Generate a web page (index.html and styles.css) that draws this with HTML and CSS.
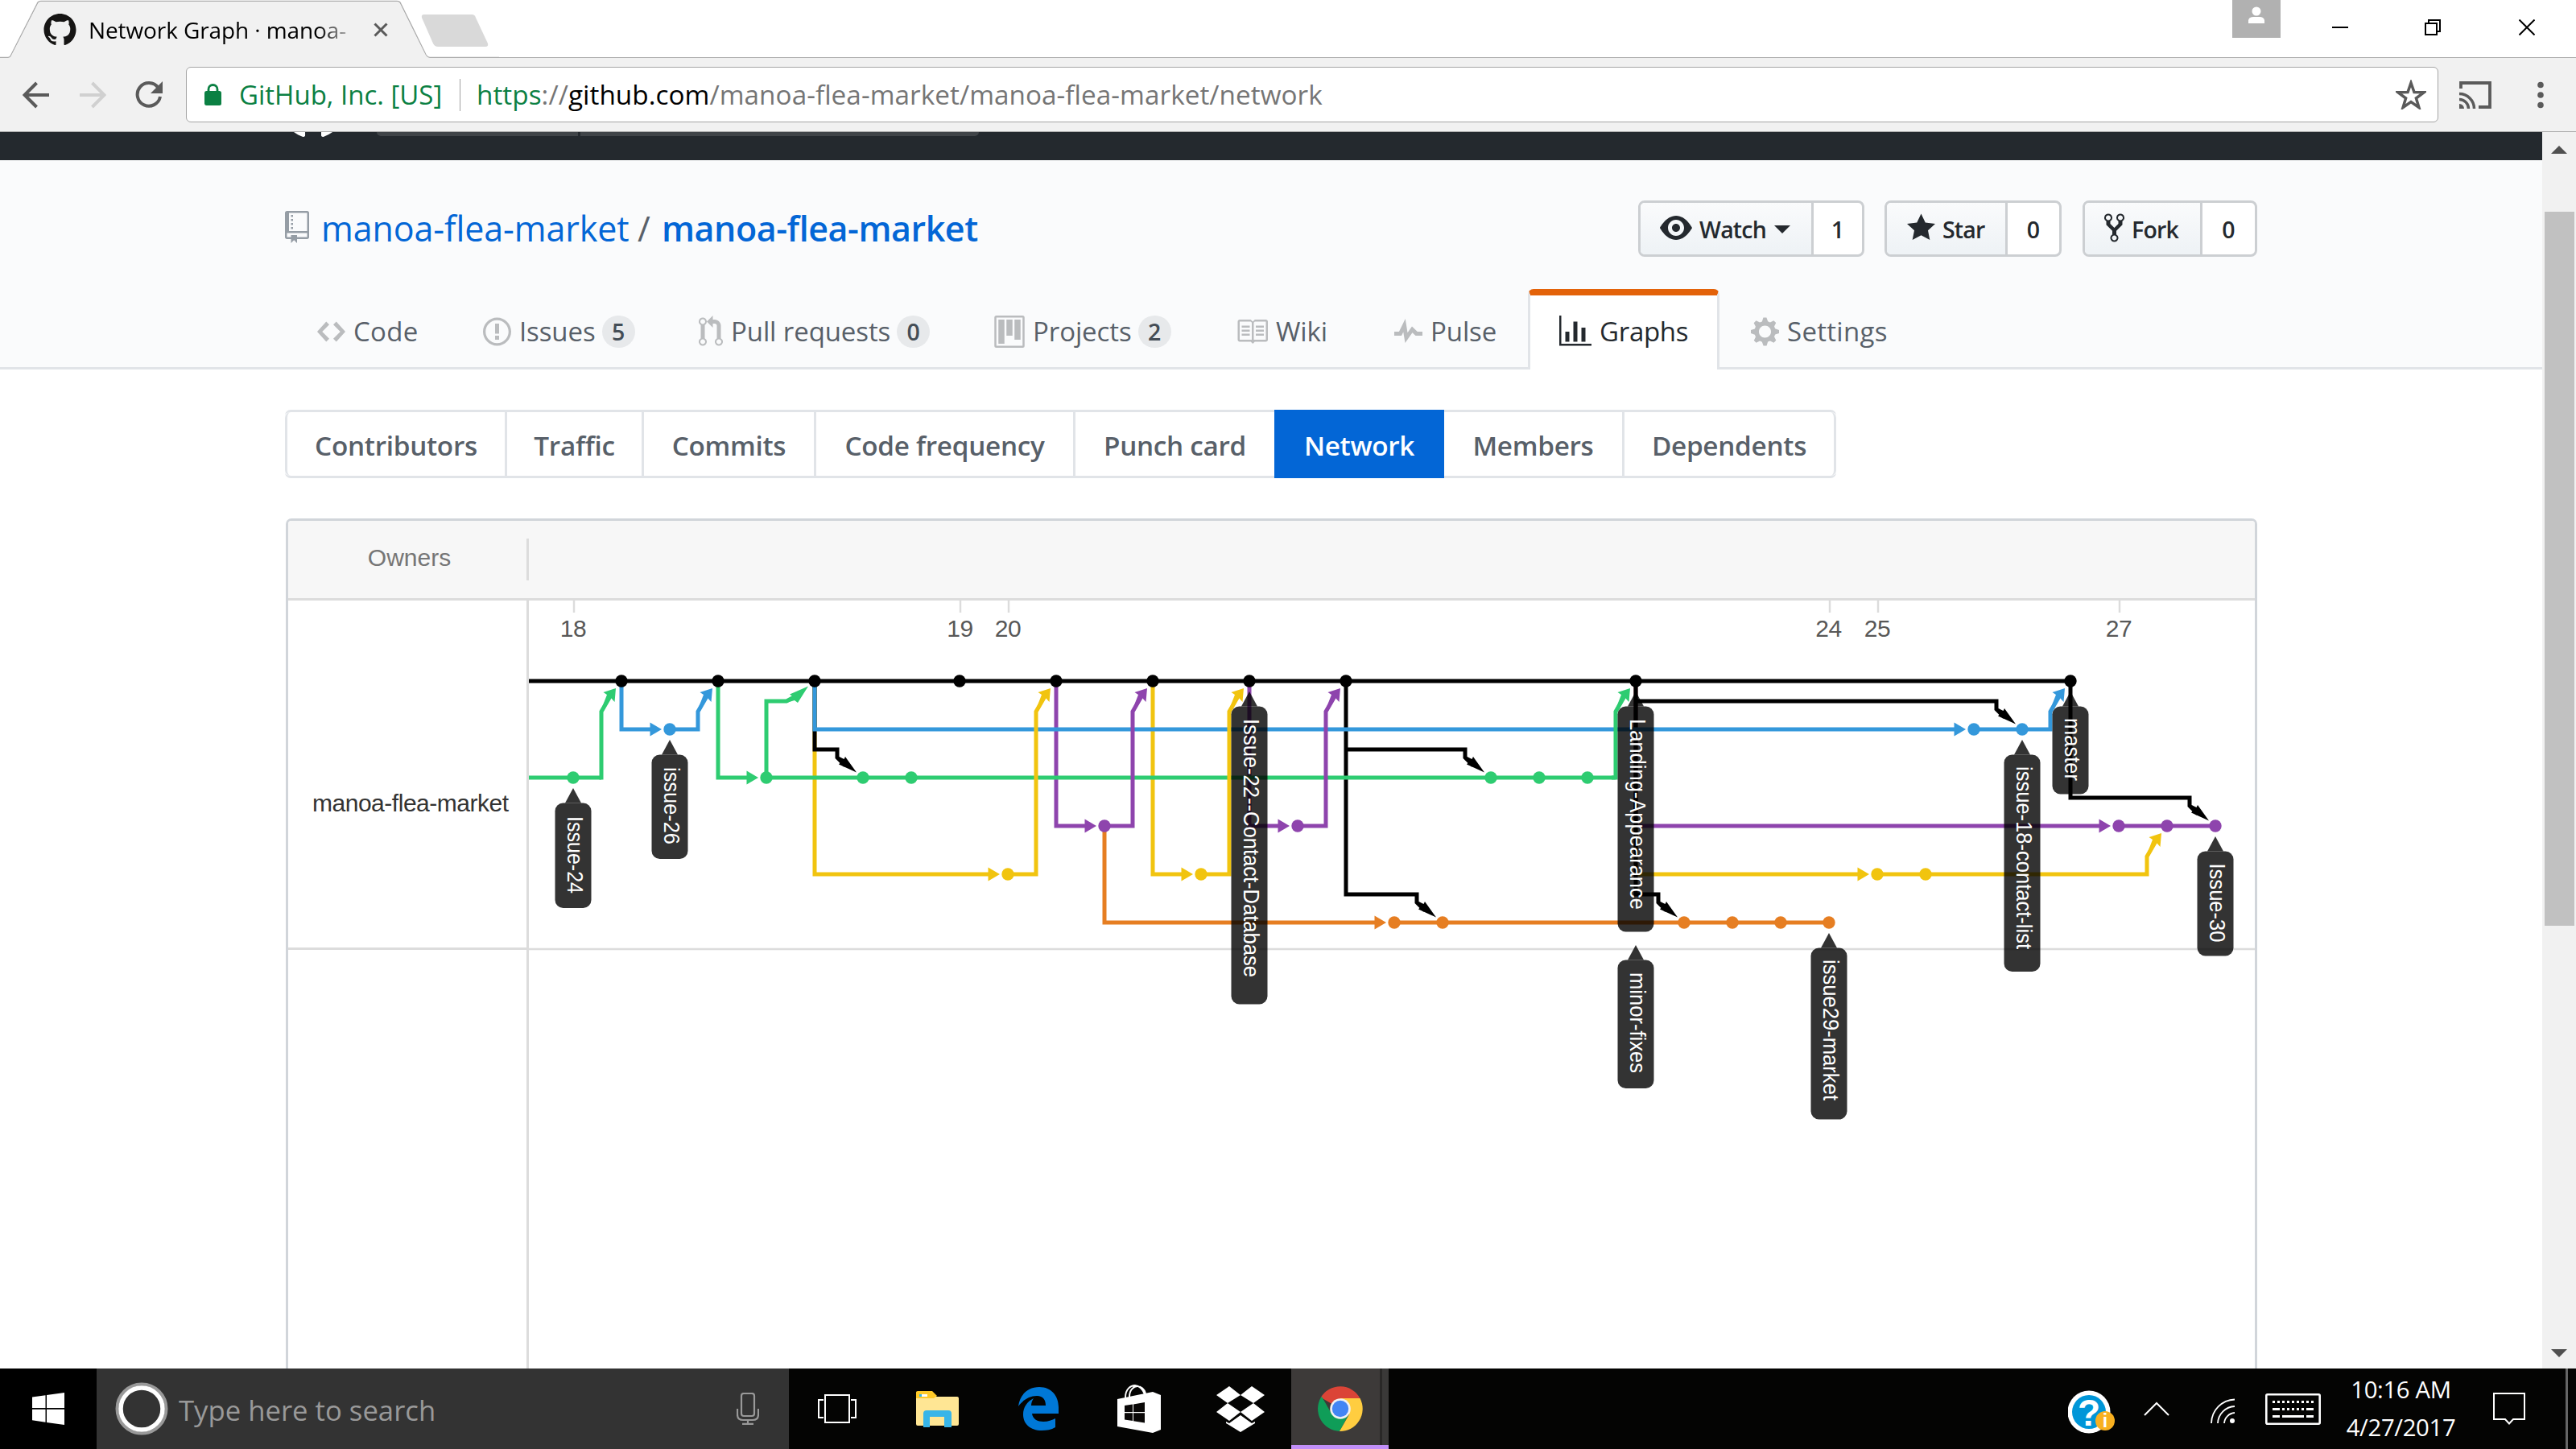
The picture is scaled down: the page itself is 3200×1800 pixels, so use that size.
FILE: index.html
```
<!DOCTYPE html>
<html lang="en">
<head>
<meta charset="utf-8">
<title>Network Graph · manoa-flea-market</title>
<link rel="stylesheet" href="styles.css">
</head>
<body>
<div class="screen">
  <header class="titlebar">
    <svg class="tab-shape" viewBox="0 0 620 72"><path d="M0 71.5H10Q13 71.5 14 68L46 5Q47 1.500 51 1.500H493Q497 1.500 498 5L529 68Q531 71.500 534 71.500H620" fill="none" stroke="#adadad" stroke-width="1.500"/><path d="M10 72Q13.500 71.500 14.500 68L47 5Q48 2 51 2H493Q496 2 497 5L528.500 68Q530.500 71.500 534 72Z" fill="#f1f1f1"/><path d="M527 18H586Q590 18 591 22L606 54Q607 58 603 58H544Q540 58 538 54L524 22Q523 18 527 18Z" fill="#d9d9d9"/></svg>
    <div class="tab">
      <svg class="favicon" viewBox="0 0 16 16"><path fill="#161514" d="M8 0C3.580 0 0 3.580 0 8c0 3.540 2.290 6.530 5.470 7.590.4.070.55-.17.55-.38 0-.19-.01-.82-.01-1.490-2.010.37-2.530-.49-2.690-.94-.09-.23-.48-.94-.82-1.130-.28-.15-.68-.52-.01-.53.63-.01 1.080.58 1.230.82.72 1.210 1.870.87 2.330.66.070-.52.28-.87.51-1.070-1.780-.2-3.640-.89-3.640-3.950 0-.87.31-1.590.82-2.150-.08-.2-.36-1.020.08-2.120 0 0 .67-.21 2.200.82.64-.18 1.320-.27 2-.27.68 0 1.360.09 2 .27 1.530-1.040 2.200-.82 2.200-.82.44 1.100.16 1.920.08 2.120.51.56.82 1.270.82 2.150 0 3.070-1.870 3.750-3.650 3.950.29.25.54.73.54 1.480 0 1.070-.01 1.930-.01 2.200 0 .21.15.46.55.38A8.013 8.013 0 0 0 16 8c0-4.420-3.580-8-8-8z"/></svg>
      <span class="tab-title">Network Graph · manoa-</span>
      <svg class="tab-close" viewBox="0 0 18 18"><path d="M1.500 1.500l15 15M16.500 1.500l-15 15" stroke="#5a5a5a" stroke-width="3"/></svg>
    </div>
    <div class="window-controls">
      <span class="profile"><svg viewBox="0 0 60 47"><circle cx="30" cy="14" r="5.500" fill="#fff"/><path d="M20 29v-4q1-4 6-4h8q5 0 6 4v4z" fill="#fff"/></svg></span>
      <svg class="win" viewBox="0 0 20 20"><path d="M0 10h20" stroke="#000" stroke-width="2"/></svg>
      <svg class="win" viewBox="0 0 20 20"><path d="M1 5h14v14H1zM5 5V1h14v14h-4" fill="none" stroke="#000" stroke-width="2"/></svg>
      <svg class="win" viewBox="0 0 20 20"><path d="M.5.5l19 19M19.500.5l-19 19" stroke="#000" stroke-width="2"/></svg>
    </div>
  </header>

  <div class="toolbar">
    <div class="nav-buttons">
      <svg viewBox="0 0 34 34"><path d="M33 17H3M17.500 2L2.500 17l15 15" fill="none" stroke="#5a5a5a" stroke-width="4"/></svg>
      <svg viewBox="0 0 34 34"><path d="M1 17h30M16.500 2l15 15-15 15" fill="none" stroke="#d0d0d0" stroke-width="4"/></svg>
      <svg viewBox="0 0 34 34"><path d="M28.500 8A14.300 14.300 0 1 0 31 19" fill="none" stroke="#5a5a5a" stroke-width="4"/><path d="M34 0v15H19z" fill="#5a5a5a"/></svg>
    </div>
    <div class="omnibox">
      <svg class="lock" viewBox="0 0 21 27"><rect y="9" width="21" height="18" rx="2.500" fill="#0b8043"/><path d="M5 10V7a5.500 5.500 0 0 1 11 0v3" fill="none" stroke="#0b8043" stroke-width="2.800"/></svg>
      <span class="org">GitHub, Inc. [US]</span>
      <span class="url"><span class="scheme">https</span>://<span class="host">github.com</span>/manoa-flea-market/manoa-flea-market/network</span>
      <svg class="bookmark" viewBox="0 0 38 37"><path d="M19 4l4 11.500 12 .3-9.600 7.200 3.500 11.500L19 27.600 9.100 34.500 12.600 23 3 15.800l12-.3z" fill="none" stroke="#5a5a5a" stroke-width="3.500"/></svg>
    </div>
    <svg class="cast" viewBox="0 0 40 34"><path d="M2 9V2h36v30H24" fill="none" stroke="#5a5a5a" stroke-width="3.800"/><path d="M0 28a6 6 0 0 1 6 6H0z" fill="#5a5a5a"/><path d="M0 22.500A11.500 11.500 0 0 1 11.500 34M0 15.500A18.500 18.500 0 0 1 18.500 34" fill="none" stroke="#5a5a5a" stroke-width="3.500"/></svg>
    <svg class="menu" viewBox="0 0 8 34"><g fill="#5a5a5a"><circle cx="4" cy="4.500" r="3.800"/><circle cx="4" cy="17" r="3.800"/><circle cx="4" cy="29.500" r="3.800"/></g></svg>
  </div>

  <div class="viewport">
    <main class="page">
      <div class="site-header">
        <svg class="mark" viewBox="0 0 16 16"><path fill="#fff" d="M8 0C3.580 0 0 3.580 0 8c0 3.540 2.290 6.530 5.470 7.590.4.070.55-.17.55-.38 0-.19-.01-.82-.01-1.490-2.010.37-2.530-.49-2.690-.94-.09-.23-.48-.94-.82-1.130-.28-.15-.68-.52-.01-.53.63-.01 1.080.58 1.230.82.72 1.210 1.870.87 2.330.66.070-.52.28-.87.51-1.070-1.780-.2-3.640-.89-3.640-3.950 0-.87.31-1.590.82-2.150-.08-.2-.36-1.020.08-2.120 0 0 .67-.21 2.200.82.64-.18 1.320-.27 2-.27.68 0 1.360.09 2 .27 1.530-1.040 2.200-.82 2.200-.82.44 1.100.16 1.920.08 2.120.51.56.82 1.270.82 2.150 0 3.070-1.870 3.750-3.650 3.950.29.25.54.73.54 1.480 0 1.070-.01 1.930-.01 2.200 0 .21.15.46.55.38A8.013 8.013 0 0 0 16 8c0-4.420-3.580-8-8-8z"/></svg>
        <div class="site-search"><span></span></div>
      </div>

      <div class="repohead">
        <div class="repo-top">
          <svg class="repo-icon" viewBox="0 0 12 16"><path d="M4 9H3V8h1v1zm0-3H3v1h1V6zm0-2H3v1h1V4zm0-2H3v1h1V2zm8-1v12c0 .55-.45 1-1 1H6v2l-1.500-1.500L3 16v-2H1c-.55 0-1-.45-1-1V1c0-.55.45-1 1-1h10c.55 0 1 .45 1 1zm-1 10H1v2h2v-1h3v1h5v-2zm0-10H2v9h9V1z"/></svg>
          <h1><a class="owner">manoa-flea-market</a><span class="slash">/</span><a class="name">manoa-flea-market</a></h1>
          <div class="actions">
            <div class="action watch"><span class="btn"><svg class="i-eye" viewBox="0 0 16 16"><path d="M8.060 2C3 2 0 8 0 8s3 6 8.060 6C13 14 16 8 16 8s-3-6-7.940-6zM8 12c-2.200 0-4-1.780-4-4 0-2.200 1.800-4 4-4 2.220 0 4 1.800 4 4 0 2.220-1.780 4-4 4zm2-4c0 1.110-.89 2-2 2-1.110 0-2-.89-2-2 0-1.110.89-2 2-2 1.110 0 2 .89 2 2z"/></svg>Watch<i class="caret"></i></span><span class="count">1</span></div>
            <div class="action star"><span class="btn"><svg class="i-star" viewBox="0 0 14 16"><path d="M14 6l-4.900-.64L7 1 4.900 5.360 0 6l3.600 3.260L2.670 14 7 11.670 11.330 14l-.93-4.740z"/></svg>Star</span><span class="count">0</span></div>
            <div class="action fork"><span class="btn"><svg class="i-fork" viewBox="0 0 10 16"><path d="M8 1a1.993 1.993 0 0 0-1 3.720V6L5 8 3 6V4.720A1.993 1.993 0 0 0 2 1a1.993 1.993 0 0 0-1 3.720V6.500l3 3v1.780A1.993 1.993 0 0 0 5 15a1.993 1.993 0 0 0 1-3.720V9.500l3-3V4.720A1.993 1.993 0 0 0 8 1zM2 4.200C1.340 4.200.8 3.650.8 3c0-.65.55-1.200 1.200-1.200.65 0 1.200.55 1.200 1.200 0 .65-.55 1.200-1.200 1.200zm3 10c-.66 0-1.200-.55-1.200-1.200 0-.65.55-1.200 1.200-1.200.65 0 1.200.55 1.200 1.200 0 .65-.55 1.200-1.200 1.200zm3-10c-.66 0-1.200-.55-1.200-1.200 0-.65.55-1.200 1.200-1.200.65 0 1.200.55 1.200 1.200 0 .65-.55 1.200-1.200 1.200z"/></svg>Fork</span><span class="count">0</span></div>
          </div>
        </div>
        <nav class="reponav">
          <a><svg class="w14" viewBox="0 0 14 16"><path d="M9.500 3L8 4.500 11.500 8 8 11.500 9.500 13 14 8 9.500 3zm-5 0L0 8l4.500 5L6 11.500 2.500 8 6 4.500 4.500 3z"/></svg>Code</a>
          <a><svg class="w14" viewBox="0 0 14 16"><path d="M7 2.300c3.140 0 5.700 2.560 5.700 5.700s-2.560 5.700-5.700 5.700A5.710 5.710 0 0 1 1.300 8c0-3.140 2.560-5.700 5.700-5.700zM7 1C3.140 1 0 4.140 0 8s3.140 7 7 7 7-3.140 7-7-3.140-7-7-7zm1 3H6v5h2V4zm0 6H6v2h2v-2z"/></svg>Issues<b>5</b></a>
          <a><svg class="w12" viewBox="0 0 12 16"><path d="M11 11.280V5c-.03-.78-.34-1.470-.94-2.060C9.460 2.350 8.780 2.030 8 2H7V0L4 3l3 3V4h1c.27.02.48.11.69.31.21.2.3.42.31.69v6.280A1.993 1.993 0 0 0 10 15a1.993 1.993 0 0 0 1-3.720zm-1 2.920c-.66 0-1.200-.55-1.200-1.200 0-.65.55-1.200 1.200-1.200.65 0 1.200.55 1.200 1.200 0 .65-.55 1.200-1.200 1.200zM4 3c0-1.110-.89-2-2-2a1.993 1.993 0 0 0-1 3.720v6.560A1.993 1.993 0 0 0 2 15a1.993 1.993 0 0 0 1-3.720V4.720c.59-.34 1-.98 1-1.720zm-.8 10c0 .66-.55 1.200-1.200 1.200-.65 0-1.200-.55-1.200-1.200 0-.65.55-1.200 1.200-1.200.65 0 1.200.55 1.200 1.200zM2 4.200C1.340 4.200.8 3.650.8 3c0-.65.55-1.200 1.200-1.200.65 0 1.200.55 1.200 1.200 0 .65-.55 1.200-1.200 1.200z"/></svg>Pull requests<b>0</b></a>
          <a><svg class="w15" viewBox="0 0 15 16"><path fill-rule="evenodd" d="M10 12h3V2h-3v10zm-4-2h3V2H6v8zm-4 4h3V2H2v12zm-1 1h13V1H1v14zM14 0H1a1 1 0 0 0-1 1v14a1 1 0 0 0 1 1h13a1 1 0 0 0 1-1V1a1 1 0 0 0-1-1z"/></svg>Projects<b>2</b></a>
          <a><svg class="w16" viewBox="0 0 16 16"><path d="M3 5h4v1H3V5zm0 3h4V7H3v1zm0 2h4V9H3v1zm11-5h-4v1h4V5zm0 2h-4v1h4V7zm0 2h-4v1h4V9zm2-6v9c0 .55-.45 1-1 1H9.500l-1 1-1-1H2c-.55 0-1-.45-1-1V3c0-.55.45-1 1-1h5.500l1 1 1-1H15c.55 0 1 .45 1 1zm-8 .5L7.500 3H2v9h6V3.500zm7-.5H9.500l-.5.5V12h6V3z"/></svg>Wiki</a>
          <a><svg class="w14" viewBox="0 0 14 16"><path d="M11.500 8L8.800 5.400 6.600 8.500 5.500 1.600 2.380 8H0v2h3.600l.9-1.800.9 5.400L9 8.500l1.600 1.500H14V8h-2.500z"/></svg>Pulse</a>
          <a class="selected"><svg class="w16" viewBox="0 0 16 16"><path d="M16 14v1H0V0h1v14h15zM5 13H3V8h2v5zm4 0H7V3h2v10zm4 0h-2V6h2v7z"/></svg>Graphs</a>
          <a class="wide"><svg class="w14" viewBox="0 0 14 16"><path d="M14 8.770v-1.600l-1.940-.64-.45-1.090.88-1.840-1.130-1.130-1.810.91-1.090-.45-.69-1.920h-1.600l-.63 1.940-1.110.45-1.840-.88-1.130 1.130.91 1.810-.45 1.090L0 7.230v1.590l1.940.64.45 1.090-.88 1.840 1.130 1.130 1.810-.91 1.090.45.69 1.920h1.590l.63-1.940 1.110-.45 1.840.88 1.130-1.130-.92-1.810.47-1.090L14 8.750v.02zM7 11c-1.660 0-3-1.340-3-3s1.340-3 3-3 3 1.340 3 3-1.340 3-3 3z"/></svg>Settings</a>
        </nav>
      </div>

      <div class="subnav"><a>Contributors</a><a>Traffic</a><a>Commits</a><a>Code frequency</a><a>Punch card</a><a class="current">Network</a><a>Members</a><a>Dependents</a></div>

      <section class="network">
        <div class="network-head"><span>Owners</span></div>
        <div class="network-body">
          <div class="owners"><span>manoa-flea-market</span></div>
          <svg class="graph" viewBox="657 746 2144 954">
            <defs>
              <path id="merge" d="M-7 9L-22.500 14-18 17-25 35 -22 37-13 21-8.500 26z" fill="currentColor"/>
              <path id="into" d="M-10 0L-24.500-8.500V8.500z" fill="currentColor"/>
              <path id="shift" d="M-8-6.500L-22-26-23.500-23-29.500-26V-24L-27-20-30-16.500z" fill="currentColor"/>
              <path id="tip" d="M0 13L10 31.500H-10z"/>
            </defs>
            <path d="M657 1179H2801" stroke="#dcdcdc" stroke-width="2.500"/>
            <path d="M713 746v15M1193 746v15M1253 746v15M2273 746v15M2333 746v15M2633 746v15" stroke="#dcdcdc" stroke-width="2.500"/>
            <g class="days"><text x="712" y="791">18</text><text x="1192.500" y="791">19</text><text x="1252" y="791">20</text><text x="2271.500" y="791">24</text><text x="2332" y="791">25</text><text x="2632" y="791">27</text></g>
            <g transform="translate(712 846)">
              <g class="line">
                <path class="yellow" d="M300 0V240H516M720 0V240H756M1320 0V240H1596"/>
                <path class="orange" d="M660 180V300H996"/>
                <path class="purple" d="M600 0V180H636M840 0V180H876M1320 0V180H1896"/>
                <path class="black" d="M300 0V85H328V95L338 105M960 0V85H1108V95L1118 105M960 85V265H1048V275L1058 285M1320 0V25H1768V35L1778 45M1320 25V265H1348V275L1358 285M1860 0V145H2008V155L2018 165"/>
                <path class="green" d="M-55 120H35M180 0V120H216M240 120H1295"/>
                <path class="blue" d="M60 0V60H96M300 0V60H1716"/>
                <path class="orange" d="M1020 300H1560"/>
                <path class="purple" d="M1920 180H2040"/>
                <path class="green" d="M32.500 120H35V38L46 19M240 120V25H265L278 18M1290 120H1295V38L1306 19"/>
                <path class="blue" d="M120 60H155V38L166 19M1740 60H1835V38L1846 19"/>
                <path class="yellow" d="M540 240H575V38L586 19M780 240H815V38L826 19M1620 240H1955V218L1966 199"/>
                <path class="purple" d="M660 180H695V38L706 19M900 180H935V38L946 19"/>
                <path class="black" d="M-55 0H1860"/>
              </g>
              <g class="c-green"><use href="#merge" x="60"/><use href="#merge" x="1320"/><path d="M292 6.500L269 16.500 273 19.500 265 23V27L275 24 279 27z"/><use href="#into" x="240" y="120"/><circle cx="0" cy="120" r="7.700"/><circle cx="240" cy="120" r="7.700"/><circle cx="360" cy="120" r="7.700"/><circle cx="420" cy="120" r="7.700"/><circle cx="1140" cy="120" r="7.700"/><circle cx="1200" cy="120" r="7.700"/><circle cx="1260" cy="120" r="7.700"/></g>
              <g class="c-blue"><use href="#merge" x="180"/><use href="#merge" x="1860"/><use href="#into" x="120" y="60"/><use href="#into" x="1740" y="60"/><circle cx="120" cy="60" r="7.700"/><circle cx="1740" cy="60" r="7.700"/><circle cx="1800" cy="60" r="7.700"/></g>
              <g class="c-yellow"><use href="#merge" x="600"/><use href="#merge" x="840"/><use href="#merge" x="1980" y="180"/><use href="#into" x="540" y="240"/><use href="#into" x="780" y="240"/><use href="#into" x="1620" y="240"/><circle cx="540" cy="240" r="7.700"/><circle cx="780" cy="240" r="7.700"/><circle cx="1620" cy="240" r="7.700"/><circle cx="1680" cy="240" r="7.700"/></g>
              <g class="c-purple"><use href="#merge" x="720"/><use href="#merge" x="960"/><use href="#into" x="660" y="180"/><use href="#into" x="900" y="180"/><use href="#into" x="1920" y="180"/><circle cx="660" cy="180" r="7.700"/><circle cx="900" cy="180" r="7.700"/><circle cx="1920" cy="180" r="7.700"/><circle cx="1980" cy="180" r="7.700"/><circle cx="2040" cy="180" r="7.700"/></g>
              <g class="c-orange"><use href="#into" x="1020" y="300"/><circle cx="1020" cy="300" r="7.700"/><circle cx="1080" cy="300" r="7.700"/><circle cx="1380" cy="300" r="7.700"/><circle cx="1440" cy="300" r="7.700"/><circle cx="1500" cy="300" r="7.700"/><circle cx="1560" cy="300" r="7.700"/></g>
              <g class="c-black"><use href="#shift" x="360" y="120"/><use href="#shift" x="1140" y="120"/><use href="#shift" x="1080" y="300"/><use href="#shift" x="1800" y="60"/><use href="#shift" x="1380" y="300"/><use href="#shift" x="2040" y="180"/><circle cx="60" cy="0" r="7.700"/><circle cx="180" cy="0" r="7.700"/><circle cx="300" cy="0" r="7.700"/><circle cx="480" cy="0" r="7.700"/><circle cx="600" cy="0" r="7.700"/><circle cx="720" cy="0" r="7.700"/><circle cx="840" cy="0" r="7.700"/><circle cx="960" cy="0" r="7.700"/><circle cx="1320" cy="0" r="7.700"/><circle cx="1860" cy="0" r="7.700"/></g>
              <g class="tags">
                <g transform="translate(0 120)"><use href="#tip"/><rect x="-22.500" y="31.500" width="45" height="130.500" rx="10"/><text transform="translate(-7.500 48) rotate(90)" textLength="96" lengthAdjust="spacingAndGlyphs">Issue-24</text></g>
                <g transform="translate(120 60)"><use href="#tip"/><rect x="-22.500" y="31.500" width="45" height="129.500" rx="10"/><text transform="translate(-7.500 47) rotate(90)" textLength="96" lengthAdjust="spacingAndGlyphs">issue-26</text></g>
                <g transform="translate(840 0)"><use href="#tip"/><rect x="-22.500" y="31.500" width="45" height="370" rx="10"/><text transform="translate(-7.500 47) rotate(90)" textLength="321" lengthAdjust="spacingAndGlyphs">Issue-22--Contact-Database</text></g>
                <g transform="translate(1320 0)"><use href="#tip"/><rect x="-22.500" y="31.500" width="45" height="280" rx="10"/><text transform="translate(-7.500 47) rotate(90)" textLength="237" lengthAdjust="spacingAndGlyphs">Landing-Appearance</text></g>
                <g transform="translate(1320 315)"><use href="#tip"/><rect x="-22.500" y="31.500" width="45" height="159.500" rx="10"/><text transform="translate(-7.500 47) rotate(90)" textLength="125" lengthAdjust="spacingAndGlyphs">minor-fixes</text></g>
                <g transform="translate(1560 300)"><use href="#tip"/><rect x="-22.500" y="31.500" width="45" height="213" rx="10"/><text transform="translate(-7.500 46) rotate(90)" textLength="175" lengthAdjust="spacingAndGlyphs">issue29-market</text></g>
                <g transform="translate(1800 60)"><use href="#tip"/><rect x="-22.500" y="31.500" width="45" height="269.500" rx="10"/><text transform="translate(-7.500 46) rotate(90)" textLength="227" lengthAdjust="spacingAndGlyphs">issue-18-contact-list</text></g>
                <g transform="translate(1860 0)"><use href="#tip"/><rect x="-22.500" y="31.500" width="45" height="109" rx="10"/><text transform="translate(-7.500 46) rotate(90)" textLength="78" lengthAdjust="spacingAndGlyphs">master</text></g>
                <g transform="translate(2040 180)"><use href="#tip"/><rect x="-22.500" y="31.500" width="45" height="130" rx="10"/><text transform="translate(-7.500 46.500) rotate(90)" textLength="98" lengthAdjust="spacingAndGlyphs">Issue-30</text></g>
              </g>
            </g>
          </svg>
        </div>
      </section>
    </main>
    <aside class="scrollbar"><i class="up"></i><i class="thumb"></i><i class="down"></i></aside>
  </div>

  <footer class="taskbar">
    <div class="start"><svg viewBox="0 0 40 40"><path d="M0 5.500L16.500 3.200V19H0zM18 3L40 0V19H18zM0 20.700H16.500V36.700L0 34.300zM18 20.700H40V40L18 37z" fill="#fff"/></svg></div>
    <div class="search">
      <svg class="ring" viewBox="0 0 66 66"><circle cx="33" cy="33" r="30.500" fill="none" stroke="#999" stroke-width="4"/><circle cx="33" cy="33" r="26" fill="none" stroke="#fff" stroke-width="5.500"/></svg>
      <span>Type here to search</span>
      <svg class="mic" viewBox="0 0 28 40"><rect x="6" y="1" width="16" height="28" rx="3" fill="none" stroke="#999" stroke-width="2.200"/><path d="M1 20v7q0 7 7 7h12q7 0 7-7v-7M14 34v5M7 38.800h14" fill="none" stroke="#999" stroke-width="2.200"/></svg>
    </div>
    <div class="apps">
      <span><svg viewBox="0 0 48 36" width="48" height="36"><path d="M9 1h30v34H9zM7 7H1v22h6M41 7h6v22h-6" fill="none" stroke="#fff" stroke-width="2"/></svg></span>
      <span><svg viewBox="0 0 53 45" width="53" height="45"><path d="M0 2Q0 1 2 1H20L25 7H51Q53 7 53 9V41Q53 43 51 43H2Q0 43 0 41z" fill="#ffe694"/><path d="M0 2Q0 0 2 0H20L26 6 22 9H0z" fill="#ffca28"/><path d="M4 4h10v3H4z" fill="#fff"/><path d="M4 4h3v3H4z" fill="#38b5e8"/><path d="M9 45V28Q9 24 13 24H40Q44 24 44 28V45H35V32H17V45z" fill="#38b5e8"/></svg></span>
      <span><svg viewBox="0 0 50 54" width="50" height="54"><path d="M0 24C2 9 12 0 26 0C41 0 50 11 50 25V33H17C18 40 24 43 31 43C37 43 42 41 46 39V50C41 53 35 54 29 54C15 54 6 46 6 34C6 25 11 18 19 14C17 17 16 20 16 23H34C34 16 31 11 23 11C13 11 5 17 0 24z" fill="#0078d7"/></svg></span>
      <span><svg viewBox="0 0 54 60" width="54" height="60"><path d="M0 18L44 9 54 13V56L44 60 0 52z" fill="#fff"/><path d="M10 16C10 5 17 1 22 1S32 6 34 12M15 15C15 6 21 2 25 2S34 6 35 11" fill="none" stroke="#fff" stroke-width="2"/><path d="M9 26L19 24.500V34H9zM20 24.400L34 22V34H20zM9 35.300H19V45L9 43.500zM20 35.300H34V47.500L20 45.200z" fill="#0a0807"/></svg></span>
      <span><svg viewBox="0 0 60 57" width="60" height="57"><path d="M16 0L30 11 14 21 0 11zM44 0L60 11 46 21 30 11zM14 21L30 32 16 43 0 32zM46 21L60 32 44 43 30 32zM30 36L44 46 48 44V46L30 57 12 46V44L16 46z" fill="#fff"/></svg></span>
      <span class="active"><svg viewBox="0 0 56 56" width="56" height="56"><path d="M28 28L3.800 14A28 28 0 0 1 52.500 15z" fill="#db4437"/><path d="M3.800 14A28 28 0 0 0 27 56L39 34 28 28 17 34 5 13z" fill="#0f9d58"/><path d="M28 15H52.500A28 28 0 0 1 27 56L39 35z" fill="#ffcd40"/><circle cx="28" cy="28" r="12.800" fill="#f1f1f1"/><circle cx="28" cy="28" r="10.200" fill="#4285f4"/></svg></span>
    </div>
    <div class="tray">
      <svg class="t-help" viewBox="0 0 58 54"><circle cx="26" cy="27" r="26.500" fill="#fff"/><circle cx="26" cy="27" r="21" fill="#0096d8"/><text x="26" y="44" class="q">?</text><circle cx="46" cy="38" r="12" fill="#f8b020"/><text x="46" y="46" class="inf">i</text></svg>
      <svg class="t-up" viewBox="0 0 32 18"><path d="M1 17L16 2l15 15" fill="none" stroke="#fff" stroke-width="2"/></svg>
      <svg class="t-wifi" viewBox="0 0 30 31"><path d="M1 31A30 30 0 0 1 30 1.500M9 31A22 22 0 0 1 30 10M17 31A14 14 0 0 1 30 18" fill="none" stroke="#fff" stroke-width="1.800"/><circle cx="27" cy="28" r="3" fill="#fff"/></svg>
      <svg class="t-kbd" viewBox="0 0 69 39"><rect x="1.300" y="1.300" width="66.400" height="36.400" rx="1.500" fill="none" stroke="#fff" stroke-width="2.600"/><path d="M9 10.500h52M21 19.500h28" stroke="#fff" stroke-width="3" stroke-dasharray="3 3"/><path d="M9 19.500h9M51 19.500h9M9 28.500h9M21 28.500h27M51 28.500h9" stroke="#fff" stroke-width="3"/></svg>
      <div class="clock"><span>10:16 AM</span><span class="date">4/27/2017</span></div>
      <svg class="t-note" viewBox="0 0 40 40"><path d="M1 1h38v32H25l-5 5.500-5-5.500H1z" fill="none" stroke="#fff" stroke-width="2"/></svg>
      <i class="desk"></i>
    </div>
  </footer>
</div>
</body>
</html>
```
FILE: styles.css
```
* { box-sizing: border-box; }
body { margin: 0; font-family: "Open Sans", "Noto Sans", sans-serif; color: #24292e; background: #fff; }
svg { display: block; flex: none; }
.screen { width: 3200px; height: 1800px; display: flex; flex-direction: column; overflow: hidden; }

/* Browser window */
.titlebar { height: 72px; display: grid; grid-template-columns: 620px 1fr; align-items: start; border-bottom: 1px solid #adadad; flex: none; }
.tab-shape { grid-area: 1 / 1; width: 620px; height: 72px; }
.tab { grid-area: 1 / 1; display: flex; align-items: center; height: 74px; padding-left: 54px; }
.favicon { width: 41px; height: 40px; margin-right: 15px; }
.tab-title { width: 332px; font-size: 28px; line-height: 40px; letter-spacing: -.1px; color: #000; white-space: nowrap; -webkit-mask-image: linear-gradient(90deg, #000 285px, transparent 335px); mask-image: linear-gradient(90deg, #000 285px, transparent 335px); }
.tab-close { width: 18px; height: 18px; margin-left: 22px; }
.window-controls { display: flex; align-items: flex-start; justify-content: flex-end; padding-right: 51px; }
.profile { width: 60px; height: 47px; background: #b1b1b1; margin-right: 64px; }
.win { width: 20px; height: 20px; margin-top: 24px; }
.win + .win { margin-left: 95px; }
.win:last-child { margin-left: 97px; }
.toolbar { height: 92px; background: #f1f1f1; border-bottom: 1px solid #adadad; display: flex; align-items: center; flex: none; padding: 0 40px 0 28px; }
.nav-buttons { display: flex; gap: 36px; width: 203px; }
.nav-buttons svg { width: 34px; height: 34px; }
.omnibox { width: 2798px; height: 69px; display: flex; align-items: center; border: 1px solid #a5a5a5; border-radius: 6px; background: #fff; padding: 0 14px 0 22px; font-size: 33px; line-height: 40px; white-space: nowrap; }
.lock { width: 21px; height: 27px; margin-right: 22px; }
.org { color: #0b8043; width: 275px; border-right: 1px solid #a0a0a0; }
.url { color: #757575; margin-left: 20px; font-size: 33.3px; letter-spacing: .04px; padding-bottom: 1px; }
.scheme { color: #0b8043; }
.host { color: #000; }
.bookmark { width: 38px; height: 37px; margin-left: auto; }
.cast { width: 40px; height: 34px; margin-left: 26px; }
.menu { width: 8px; height: 34px; margin-left: auto; }

/* Page */
.viewport { height: 1536px; display: flex; overflow: hidden; flex: none; }
.page { width: 3158px; height: 1536px; overflow: hidden; }
.site-header { height: 35px; background: #24292e; display: flex; padding-left: 349px; overflow: hidden; }
.mark { width: 80px; height: 80px; margin-top: -72px; }
.site-search { width: 748px; height: 5px; margin-left: 39px; background: #404448; border-radius: 0 0 6px 6px; }
.site-search span { display: block; width: 3px; height: 5px; margin-left: 250px; background: #24292e; }
.repohead { height: 260px; background: #fafbfc; border-bottom: 3px solid #e1e4e8; padding: 0 354px; }
.repo-top { height: 160px; padding-top: 50px; display: flex; align-items: flex-start; }
.repo-icon { width: 30px; height: 40px; margin: 13px 15px 0 0; fill: #959da5; }
h1 { margin: 5px 0 0; font-size: 43px; line-height: 60px; font-weight: 400; color: #586069; display: flex; white-space: nowrap; letter-spacing: -.1px; }
.owner, .name { color: #0366d6; }
.owner { width: 393px; }
.slash { width: 30px; }
.name { font-weight: 600; letter-spacing: -.45px; }
.actions { display: flex; margin-left: auto; gap: 25px; width: 769px; flex: none; }
.action { height: 70px; display: flex; border: 3px solid #cccfd2; border-radius: 8px; background: #fff; font-size: 28.500px; font-weight: 600; flex: none; overflow: hidden; }
.watch { width: 281px; } .star { width: 220px; } .fork { width: 217px; margin-left: 1px; }
.btn { display: flex; align-items: center; background: linear-gradient(#fafbfc, #eff3f6 90%); border-right: 3px solid #cccfd2; flex: none; letter-spacing: -.8px; padding-top: 1px; }
.btn svg { fill: #24292e; margin-top: -4px; }
.watch .btn { width: 215px; padding-left: 24px; } .star .btn { width: 150px; padding-left: 25px; } .fork .btn { width: 146px; padding-left: 24px; }
.i-eye { width: 40px; height: 40px; margin-right: 9px; }
.i-star { width: 35px; height: 40px; margin-right: 9px; }
.i-fork { width: 25px; height: 40px; margin-right: 9px; }
.caret { border: 10px solid transparent; border-top-color: #24292e; border-bottom: 0; margin-left: 10px; }
.count { flex: 1; display: flex; align-items: center; justify-content: center; padding-top: 2px; }
.reponav { display: grid; grid-template-columns: 206px 268px 367px 300px 197px 205px 238px 300px; margin-left: 1px; height: 100px; font-size: 33px; line-height: 40px; color: #586069; }
.reponav a { display: flex; align-items: center; padding: 5px 0 0 39px; height: 100px; white-space: nowrap; letter-spacing: -.1px; }
.reponav a:first-child { letter-spacing: .3px; }
.reponav .wide { letter-spacing: .3px; }
.reponav svg { height: 40px; fill: #babcbe; margin-right: 10px; }
.w12 { width: 30px; } .w14 { width: 35px; } .w15 { width: 38px; } .w16 { width: 40px; }
.reponav b { margin-left: 8px; height: 40px; min-width: 41px; border-radius: 20px; background: #e7e9eb; color: #444d56; font-size: 28.5px; font-weight: 600; line-height: 41px; text-align: center; }
.reponav .selected { background: #fff; border: 3px solid #e1e4e8; border-top: 8px solid #e36209; border-bottom: 0; border-radius: 7px 7px 0 0; height: 100px; padding: 0 0 3px 36px; color: #24292e; letter-spacing: -.3px; }
.reponav .selected svg { fill: #24292e; }
.subnav { display: grid; grid-template-columns: 273px 170px 214px 322px 250px 211px 221px 266px; width: 1927px; height: 85px; margin: 50px 0 0 354px; border: 3px solid #e1e4e8; border-width: 3px 0; border-radius: 7px; }
.subnav a { display: flex; align-items: center; justify-content: center; border-left: 3px solid #e1e4e8; color: #586069; font-weight: 600; font-size: 33.3px; letter-spacing: -.3px; padding-top: 2px; white-space: nowrap; }
.subnav a:first-child { border-radius: 7px 0 0 7px; }
.subnav a:last-child { border-right: 3px solid #e1e4e8; border-radius: 0 7px 7px 0; }
.subnav .current { background: #0366d6; color: #fff; border: 0; margin: -3px 0; }
.subnav .current + a { border-left: 0; }
.network { width: 2449px; height: 1100px; margin: 50px 0 0 355px; border: 3px solid #d1d5da; border-radius: 7px; overflow: hidden; font-family: "Liberation Sans", Arial, sans-serif; }
.network-head { height: 99px; background: #f7f7f7; border-bottom: 3px solid #dcdcdc; display: flex; align-items: center; font-size: 30px; color: #767676; }
.network-head span { width: 299px; height: 52px; line-height: 48px; border-right: 3px solid #dcdcdc; text-align: center; padding-left: 5px; }
.network-body { display: flex; height: 954px; }
.owners { width: 299px; border-right: 3px solid #dcdcdc; flex: none; }
.owners span { display: block; height: 434px; padding: 232px 0 0 30px; border-bottom: 3px solid #dcdcdc; font-size: 30px; line-height: 40px; letter-spacing: -.48px; color: #333; white-space: nowrap; }
.graph { width: 2144px; height: 954px; }
.days { font-size: 30px; fill: #585858; text-anchor: middle; letter-spacing: -.4px; }
.line path { fill: none; stroke-width: 5; }
.black { stroke: #000; } .green { stroke: #2ecc71; } .blue { stroke: #3498db; } .yellow { stroke: #f1c40f; } .purple { stroke: #8e44ad; } .orange { stroke: #e67e22; }
.c-black { color: #000; fill: #000; } .c-green { color: #2ecc71; fill: #2ecc71; } .c-blue { color: #3498db; fill: #3498db; } .c-yellow { color: #f1c40f; fill: #f1c40f; } .c-purple { color: #8e44ad; fill: #8e44ad; } .c-orange { color: #e67e22; fill: #e67e22; }
.tags { fill: rgba(0, 0, 0, .8); }
.tags text { fill: #fff; font-size: 27.5px; }
.scrollbar { width: 42px; background: #f1f1f1; display: flex; flex-direction: column; align-items: center; }
.up { border: 10px solid transparent; border-top: 0; border-bottom-color: #505050; margin-top: 17px; }
.thumb { width: 37px; height: 887px; background: #c1c1c1; margin-top: 72px; }
.down { border: 10px solid transparent; border-bottom: 0; border-top-color: #505050; margin: auto 0 14px; }

/* Taskbar */
.taskbar { height: 100px; display: flex; background: #040403; color: #fff; flex: none; }
.start { width: 120px; background: #000; display: flex; align-items: center; justify-content: center; }
.start svg { width: 40px; height: 40px; }
.search { width: 860px; background: #333; display: flex; align-items: center; padding: 0 37px 0 23px; font-size: 34.7px; color: #999; }
.ring { width: 66px; height: 66px; margin-right: 13px; }
.search span { white-space: nowrap; padding-top: 2px; }
.mic { width: 28px; height: 40px; margin-left: auto; }
.apps { display: grid; grid-template-columns: 120px 128px 124px 125px 127px 121px; }
.apps span { display: flex; align-items: center; justify-content: center; }
.apps .active { background: linear-gradient(90deg, #3d3a39 110px, #292827 110px, #292827 113px, #3a3938 113px); border-bottom: 5px solid #c28ff8; padding-top: 5px; }
.tray { display: flex; align-items: center; margin-left: auto; }
.t-help { width: 58px; height: 54px; margin: 7px 36px 0 0; }
.q { font: 700 46px "Liberation Sans", Arial, sans-serif; fill: #fff; text-anchor: middle; }
.inf { font: 700 23px "Liberation Sans", Arial, sans-serif; fill: #fff; text-anchor: middle; }
.t-up { width: 32px; height: 18px; margin-right: 51px; }
.t-wifi { width: 30px; height: 31px; margin: 4px 38px 0 0; }
.t-kbd { width: 69px; height: 39px; margin-right: 32px; }
.clock { width: 135px; display: flex; flex-direction: column; align-items: center; font-size: 29.3px; line-height: 47px; white-space: nowrap; letter-spacing: -.35px; padding-bottom: 0; }
.t-note { width: 40px; height: 40px; margin: 0 50px 0 47px; }
.desk { width: 3px; height: 100px; background: #666; margin-right: 10px; }
```
